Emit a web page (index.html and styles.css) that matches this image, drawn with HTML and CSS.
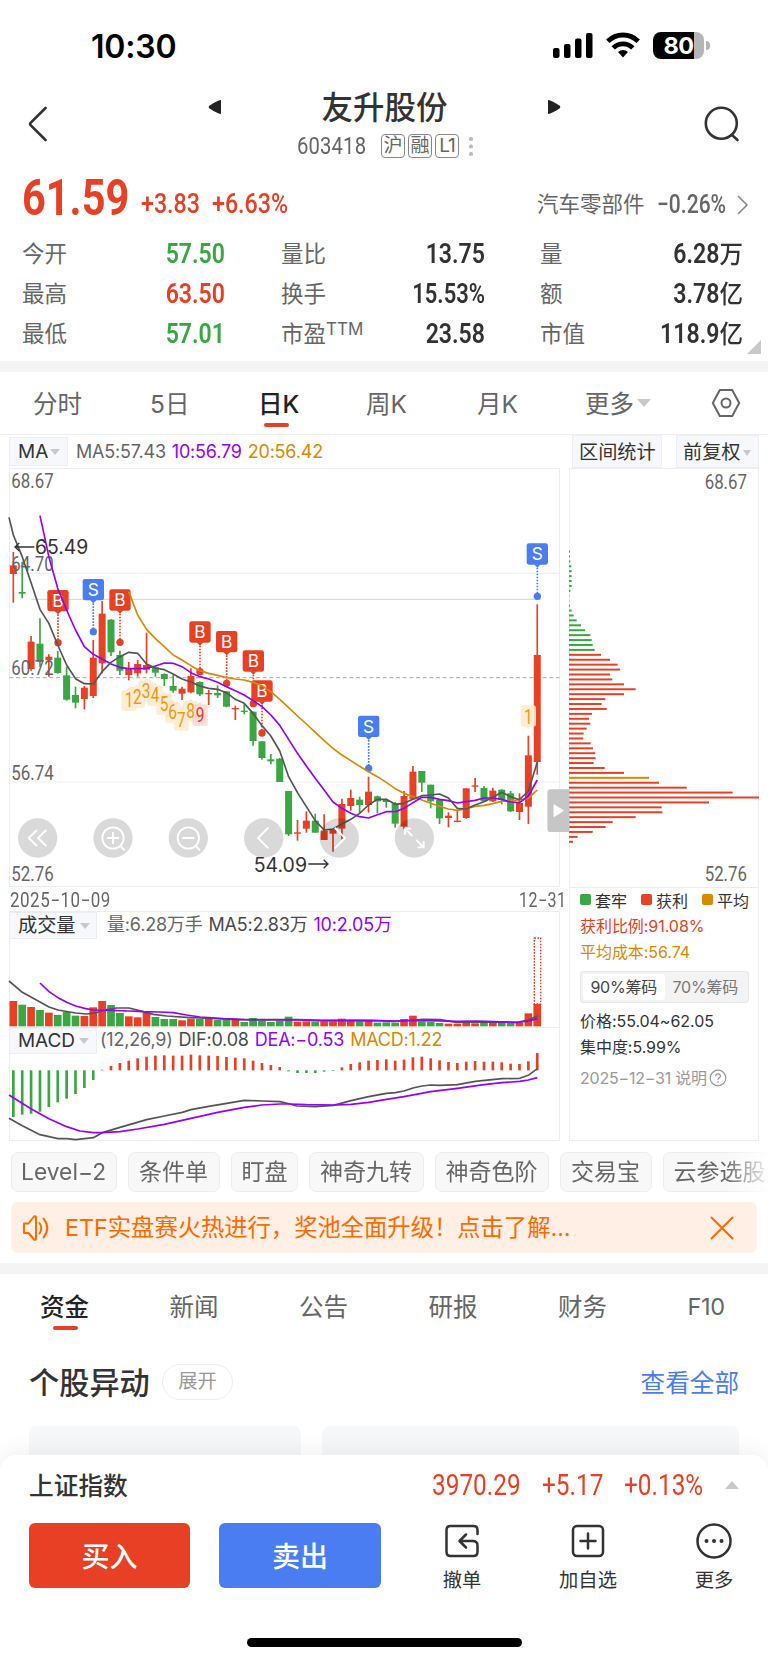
FILE: index.html
```html
<!DOCTYPE html>
<html lang="zh-CN">
<head>
<meta charset="utf-8">
<title>友升股份 603418</title>
<link rel="stylesheet" href="styles.css">
</head>
<body>
<div class="phone">
  <div class="status">
    <span class="clock">10:30</span>
    <svg class="signal" width="40" height="25" viewBox="0 0 40 25"><rect x="0" y="15" width="6.5" height="10" rx="2"/><rect x="11" y="11" width="6.5" height="14" rx="2"/><rect x="22" y="5.500" width="6.500" height="19.500" rx="2"/><rect x="33" y="0" width="6.500" height="25" rx="2"/></svg>
    <svg class="wifi" width="34" height="26" viewBox="0 0 34 26" fill="none" stroke="#000" stroke-width="4.800"><path d="M1.800 9.300a21.500 21.500 0 0 1 30.400 0"/><path d="M7.200 15.900a13.800 13.800 0 0 1 19.600 0"/><path d="M17 25.500l-5-5.400a7 7 0 0 1 10 0z" fill="#000" stroke="none"/></svg>
    <div class="battery"><span>80</span></div><i class="nub"></i>
  </div>

  <header class="head">
    <svg class="back" width="20" height="36" viewBox="0 0 20 36"><path d="M17.500 2L2.600 16.800q-1 1.200 0 2.400L17.500 34"/></svg>
    <svg class="tri prev" width="14" height="16" viewBox="0 0 14 16"><path d="M13 1v14Q9 14.500 1.200 9.200Q0 8 1.200 6.800Q9 1.500 13 1z"/></svg>
    <div class="name">
      <h1>友升股份</h1>
      <div class="code"><span class="din">603418</span><b>沪</b><b>融</b><b class="l1">L1</b><i></i></div>
    </div>
    <svg class="tri next" width="14" height="16" viewBox="0 0 14 16"><path d="M1 1v14Q5 14.500 12.800 9.200Q14 8 12.800 6.800Q5 1.500 1 1z"/></svg>
    <svg class="search" width="36" height="36" viewBox="0 0 36 36"><circle cx="17.300" cy="17.300" r="15.500"/><path d="M28 29l5.500 5"/></svg>
  </header>

  <section class="quote">
    <span class="din last">61.59</span><span class="din chg">+3.83</span><span class="din pct">+6.63%</span>
    <span class="sector">汽车零部件</span><span class="din spct">−0.26%</span>
    <svg class="more" width="13" height="20" viewBox="0 0 13 20"><path d="M2 1l9 9-9 9"/></svg>
  </section>

  <section class="stats">
    <label>今开</label><span class="din green">57.50</span><label>量比</label><span class="din">13.75</span><label>量</label><span class="din">6.28<em>万</em></span>
    <label>最高</label><span class="din red">63.50</span><label>换手</label><span class="din rate">15.53%</span><label>额</label><span class="din">3.78<em>亿</em></span>
    <label>最低</label><span class="din green">57.01</span><label>市盈<sup>TTM</sup></label><span class="din">23.58</span><label>市值</label><span class="din">118.9<em>亿</em></span>
    <i class="corner"></i>
  </section>

  <nav class="periods">
    <a>分时</a><a>5日</a><a class="on">日K</a><a>周K</a><a>月K</a><a class="drop">更多</a>
    <svg width="30" height="30" viewBox="0 0 30 30"><path d="M8.800 2h12.400l7 13-7 13H8.800l-7-13z"/><circle cx="15" cy="15" r="4.500"/></svg>
  </nav>

  <div class="tools">
    <span class="pick ma">MA</span>
    <span class="info ma-info"><span class="gray">MA5:57.43</span><span class="violet">10:56.79</span><span class="gold">20:56.42</span></span>
    <span class="pick range">区间统计</span><span class="pick adj">前复权</span>
  </div>

  <div class="charts">
    <div class="left">
      <svg id="kline" width="551" height="419" viewBox="27 24 1653 1257"></svg>
      <div class="dates"><span class="din">2025−10−09</span><span class="din">12−31</span></div>
      <div class="sub">
        <div class="subhead"><span class="pick ind">成交量</span><span class="info vol-info"><span class="gray">量:6.28万手</span><span class="dark">MA5:2.83万</span><span class="violet">10:2.05万</span></span></div>
        <svg id="volume" width="551" height="88" viewBox="27 177 1653 264"></svg>
        <div class="subhead line"><span class="pick ind">MACD</span><span class="info macd-info"><span class="gray">(12,26,9)</span><span class="dark">DIF:0.08</span><span class="violet">DEA:−0.53</span><span class="gold">MACD:1.22</span></span></div>
        <svg id="macd" width="551" height="87" viewBox="27 522 1653 261"></svg>
      </div>
    </div>
    <div class="right">
      <svg id="chips" width="190" height="418" viewBox="27 115 570 1254"></svg>
      <div class="chipinfo">
        <div class="legend"><span class="g">套牢</span><span class="r">获利</span><span class="y">平均</span></div>
        <p class="red">获利比例:91.08%</p>
        <p class="gold">平均成本:56.74</p>
        <div class="seg"><span class="on">90%筹码</span><span>70%筹码</span></div>
        <p>价格:55.04~62.05</p>
        <p>集中度:5.99%</p>
        <p class="note">2025−12−31 说明<svg width="18" height="18" viewBox="0 0 18 18"><circle cx="9" cy="9" r="7.800"/><path d="M6.600 7.300q0-2.400 2.400-2.400t2.400 2.100q0 1.200-1.300 1.900Q9 9.500 9 10.800M9 12.300v1.400"/></svg></p>
      </div>
    </div>
  </div>

  <div class="tags"><span>Level−2</span><span>条件单</span><span>盯盘</span><span>神奇九转</span><span>神奇色阶</span><span>交易宝</span><span>云参选股</span></div>

  <div class="banner">
    <svg width="28" height="28" viewBox="0 0 28 28"><path d="M2 9.500h4.500L12 2.500q2-.8 2 1v21q0 1.800-2 1L6.500 19H2zM17.500 9q3.500 5 0 10.500M21.500 4.500q7.500 9.500 0 19"/></svg>
    <span>ETF实盘赛火热进行，奖池全面升级！点击了解...</span>
    <svg class="x" width="24" height="24" viewBox="0 0 24 24"><path d="M1.500 1.500l21 21M22.500 1.500l-21 21"/></svg>
  </div>
  <div class="band"></div>

  <nav class="sections"><a class="on">资金</a><a>新闻</a><a>公告</a><a>研报</a><a>财务</a><a>F10</a></nav>
  <div class="moves"><h2>个股异动</h2><span class="pill">展开</span><a>查看全部</a></div>
  <div class="cards"><div></div><div></div></div>

  <footer class="dock">
    <div class="index"><span class="iname">上证指数</span><span class="din i1">3970.29</span><span class="din i2">+5.17</span><span class="din i3">+0.13%</span><i></i></div>
    <div class="actions">
      <button class="buy">买入</button><button class="sell">卖出</button>
      <div class="act a1"><svg width="36" height="36" viewBox="0 0 36 36"><path d="M33.500 11V7q0-4-4-4H6.500q-4 0-4 4v22q0 4 4 4h23q4 0 4-4v-6.500q0-4.500-5-4.500H16M22 11.500L15.500 18l6.500 6.500"/></svg>撤单</div>
      <div class="act a2"><svg width="36" height="36" viewBox="0 0 36 36"><rect x="3" y="3" width="30" height="30" rx="4"/><path d="M18 10.500v15M10.500 18h15"/></svg>加自选</div>
      <div class="act a3"><svg width="36" height="36" viewBox="0 0 36 36"><circle cx="18" cy="18" r="16.500"/><path class="dots" d="M10.500 18h.01M18 18h.01M25.500 18h.01"/></svg>更多</div>
    </div>
    <div class="home"></div>
  </footer>
</div>
<script src="chart.js"></script>
</body>
</html>
```
FILE: styles.css
```css
* { box-sizing: border-box; }
body { margin: 0; background: #fff; font-family: Inter, "Noto Sans CJK SC", sans-serif; color: #333; }
h1, h2, p { margin: 0; font-weight: 500; }
.phone { width: 768px; height: 1662px; overflow: hidden; display: flex; flex-direction: column; }
.phone > * { flex: none; }
svg { display: block; flex: none; }
.din { font-family: Roboto, "Noto Sans CJK SC", sans-serif; white-space: nowrap; transform: scaleX(.86); transform-origin: 0 50%; display: inline-block; }
.red { color: #e84025; }
.green { color: #3aa744; }
.violet { color: #9500ff; }
.gold { color: #d98a00; }
.gray { color: #666; }
.dark { color: #4a4a4a; }

.status { height: 80px; display: flex; align-items: flex-start; padding: 32px 0 0 91px; }
.clock { font: 600 32px/30px Inter, sans-serif; letter-spacing: -.2px; color: #000; width: 462px; }
.signal { margin-top: 1px; }
.wifi { margin: 0 13px 0 13px; }
.battery { width: 51px; height: 27px; border-radius: 8px; background: linear-gradient(90deg, #000 41px, #b5b5b5 41px); color: #fff; font: 700 23.500px/27px Inter, sans-serif; text-align: center; letter-spacing: -.5px; }
.nub { width: 4px; height: 9px; margin: 9px 0 0 2px; background: #b5b5b5; border-radius: 0 4px 4px 0; }

.head { height: 90px; display: flex; align-items: flex-start; }
.head svg { fill: none; stroke: #333; stroke-width: 2.6; stroke-linecap: round; }
.back { margin: 26px 0 0 28px; }
.head .tri { fill: #222; stroke: none; margin-top: 19px; }
.prev { margin-left: 160px; }
.name { width: 325px; text-align: center; }
.name h1 { font-size: 31.500px; line-height: 44px; margin-top: 5px; padding-top: 1px; height: 44px; color: #333; }
.code { display: flex; align-items: center; height: 28px; margin: 3px 0 0 75px; color: #666; }
.code .din { font-size: 23.500px; width: 84px; text-align: left; letter-spacing: .2px; }
.code b { width: 24px; height: 24px; margin-right: 3px; border: 1.500px solid #888; border-radius: 4px; font-size: 19px; line-height: 21px; font-weight: 400; }
.code .l1 { letter-spacing: -1px; }
.code i { width: 4px; height: 20px; margin-left: 7px; background: radial-gradient(circle at 2px 2px, #bbb 1.900px, transparent 2.200px) 0 1px / 4px 7.500px; }
.search { margin: 26px 0 0 143px; }

.quote { height: 64px; display: flex; align-items: flex-start; color: #e84025; }
.last { font-size: 50px; font-weight: 700; line-height: 56px; width: 119px; margin-left: 22px; transform: scaleX(.83); }
.chg, .pct { font-size: 27px; font-weight: 500; line-height: 69px; width: 71px; }
.pct { width: 323px; }
.sector { font-size: 21.500px; line-height: 68px; width: 120px; color: #666; margin-left: 2px; white-space: nowrap; }
.spct { font-size: 26px; font-weight: 500; line-height: 69px; color: #666; width: 79px; transform: scaleX(.81); }
.more { margin-top: 25px; fill: none; stroke: #888; stroke-width: 1.600; }

.stats { position: relative; height: 127px; padding: 0 25px 0 22px; display: grid; grid-template-columns: 58px 145px 140px 120px 138px 120px; grid-auto-rows: 39.700px; align-items: center; }
.stats label { font-size: 22.500px; color: #666; white-space: nowrap; padding-bottom: 3px; }
.stats label:nth-of-type(3n+2) { padding-left: 56px; }
.stats label:nth-of-type(3n) { padding-left: 55px; }
.stats .din { font-size: 27.500px; font-weight: 600; text-align: right; transform-origin: 100% 50%; transform: scaleX(.84); }
.stats .rate { transform: scaleX(.8); }
.stats em { font-style: normal; font-weight: 500; font-size: 25px; display: inline-block; transform: scaleX(1.120); transform-origin: 100% 50%; padding-left: 3px; line-height: 30px; }
.stats sup { font-size: 17px; line-height: 0; vertical-align: 7px; }
.corner { position: absolute; right: 7px; bottom: 7px; border: 7px solid; border-color: transparent #c8c8c8 #c8c8c8 transparent; }

.periods { height: 74px; border-top: 11px solid #f4f4f4; border-bottom: 1px solid #eee; display: grid; grid-template-columns: 117px 108px 108px 111px 108px 126px 30px; align-items: center; padding-left: 33px; font-size: 24.500px; color: #666; }
.periods a { white-space: nowrap; padding-top: 2px; line-height: 36px; }
.periods a.on, .sections a.on { color: #222; font-weight: 500; position: relative; }
.periods a.on::after { content: ""; position: absolute; left: 6px; bottom: -5px; width: 25px; height: 4px; border-radius: 2px; background: #e84025; }
.periods svg { fill: none; stroke: #666; stroke-width: 2; stroke-linejoin: round; }
.drop::after, .pick::after { content: ""; display: inline-block; border: 5px solid transparent; border-top: 6px solid #c8c8c8; border-bottom: 0; margin-left: 3px; vertical-align: 3px; }
.drop::after { border-width: 8px 7px 0; vertical-align: 6px; }

.tools { height: 33px; display: flex; align-items: flex-start; padding-left: 9px; }
.pick { background: #f7f8fc; border: 1px solid #eceef3; font-size: 19.200px; white-space: nowrap; color: #333; flex: none; }
.ma { margin-top: 2px; width: 59px; height: 29px; line-height: 27px; padding-left: 8px; font-size: 19px; }
.ma::after { margin-left: 2px; }
.info { display: flex; white-space: nowrap; font-size: 18px; letter-spacing: -.2px; }
.ma-info { margin: 2px 0 0 8px; line-height: 29px; width: 496px; gap: 6px; }
.range { width: 90px; height: 33px; line-height: 32px; padding-left: 6px; }
.range::after { display: none; }
.adj { width: 83px; height: 33px; line-height: 32px; margin-left: 14px; padding-left: 6px; }
.adj::after { margin-left: 2px; border-width: 6px 4.500px 0; }

.charts { height: 674px; display: grid; grid-template-columns: 560px 190px; padding-left: 9px; }
.charts svg { overflow: visible; }
.left { position: relative; z-index: 1; width: 551px; }
.dates { height: 25px; display: flex; color: #666; font-size: 19.500px; line-height: 27px; padding-left: 1px; }
.dates .din { transform: scaleX(.87); width: 509px; flex: none; letter-spacing: .6px; }
.dates .din + .din { width: 40px; transform: scaleX(.82); }
.sub { width: 551px; border: 1px solid #eee; height: 230px; margin-top: -1px; }
.sub > * { margin-left: -1px; }
.subhead { height: 27px; display: flex; }
.subhead.line { border-top: 1px solid #eee; width: 551px; }
.ind { width: 88px; height: 27px; line-height: 25px; padding-left: 8px; }
.line .ind { height: 26px; line-height: 23px; font-size: 19px; letter-spacing: -.1px; }
.ind::after { margin-left: 4px; }
.subhead .info { line-height: 26px; }
.line .info { line-height: 24px; }
.vol-info { margin-left: 10px; gap: 6px; }
.macd-info { margin-left: 3px; gap: 6px; }
.right { height: 673px; border: 1px solid #eee; }
.right svg { margin-left: -1px; }
.chipinfo { border-top: 1px solid #eee; padding: 0 0 0 9px; font-size: 16px; color: #333; }
.legend { display: flex; height: 26px; align-items: center; padding: 0 0 3px 1px; }
.legend span { width: 61px; flex: none; display: flex; align-items: center; white-space: nowrap; }
.legend span::before { content: ""; width: 11px; height: 11px; border-radius: 2px; margin-right: 4px; flex: none; background: #3aa744; }
.legend .r::before { background: #e84025; }
.legend .y::before { background: #d98a00; }
.chipinfo p { height: 26px; line-height: 25px; white-space: nowrap; font-weight: 400; padding-left: 1px; letter-spacing: -.05px; }
.chipinfo p.red { color: #e84025; }
.chipinfo p.gold { color: #d98a00; }
.seg { display: flex; width: 169px; height: 32px; margin: 5px 0 6px 1px; background: #f3f3f3; border: 1px solid #e6e6e6; border-radius: 3px; padding: 2px; color: #777; font-size: 16px; line-height: 26px; }
.seg span { width: 83px; text-align: center; letter-spacing: -.2px; white-space: nowrap; }
.seg .on { background: #fff; color: #444; border-radius: 3px; }
.chipinfo .note { display: flex; color: #999; align-items: center; margin-top: 4px; letter-spacing: -.2px; }
.note svg { margin-left: 2px; fill: none; stroke: #999; stroke-width: 1.200; }

.tags { margin-top: 10px; height: 40px; padding-left: 11px; display: flex; gap: 11px; overflow: hidden; -webkit-mask-image: linear-gradient(90deg, #000 725px, transparent 772px); mask-image: linear-gradient(90deg, #000 725px, transparent 772px); }
.tags span { flex: none; height: 40px; border: 1px solid #ececec; border-radius: 7px; background: #f8f8f8; color: #666; font-size: 23px; line-height: 38px; padding: 0 10px; width: 114.500px; white-space: nowrap; }
.tags span:nth-child(1) { width: 106px; padding-left: 9px; font-size: 22.800px; }
.tags span:nth-child(2), .tags span:nth-child(6) { width: 91.500px; }
.tags span:nth-child(3) { width: 67.500px; }
.banner { margin: 10px 11px 0; height: 51px; border-radius: 7px; background: #ffefe4; color: #ff6b00; display: flex; align-items: center; font-size: 23.300px; }
.banner svg { margin-left: 11px; fill: none; stroke: #ff6b00; stroke-width: 2; stroke-linecap: round; stroke-linejoin: round; }
.banner span { flex: none; width: 659px; padding: 0 0 3px 15px; white-space: nowrap; }
.banner .x { margin-left: 1px; }
.band { height: 11px; margin-top: 10px; background: #f4f4f4; }
.sections { height: 66px; display: grid; grid-template-columns: 129.500px 129.500px 129.500px 129.500px 129.500px auto; padding-left: 40px; font-size: 24.500px; line-height: 66px; color: #666; }
.sections a:last-child { font-size: 23.500px; letter-spacing: -.4px; }
.sections a.on::after { content: ""; position: absolute; left: 13px; top: 52px; width: 25px; height: 4px; border-radius: 2px; background: #e84025; }
.moves { height: 86px; display: flex; align-items: center; padding: 0 29px 0 29px; }
.moves h2 { font-size: 30.200px; width: 133px; color: #333; white-space: nowrap; padding-bottom: 5px; }
.pill { width: 71px; height: 36px; border: 1.500px solid #eee; border-radius: 18px; text-align: center; font-size: 19.300px; line-height: 32px; color: #999; margin-bottom: 2px; }
.moves a { margin-left: auto; font-size: 24.600px; color: #4b7df2; padding-bottom: 4px; }
.cards { height: 29px; padding: 0 29px; display: grid; grid-template-columns: 272px 417px; gap: 21px; }
.cards div { background: #f6f7f9; border-radius: 7px 7px 0 0; }

.dock { position: relative; height: 207px; background: #fff; border-radius: 16px 16px 0 0; box-shadow: 0 -4px 22px rgba(0, 0, 0, .06); padding: 0 29px; }
.index { height: 68px; display: flex; align-items: center; color: #e84025; padding-bottom: 8px; }
.iname { font-size: 24.700px; width: 403px; color: #333; font-weight: 500; padding: 0 0 2px; }
.index .din { font-size: 29px; transform: scaleX(.84); }
.i1 { width: 110px; } .i2 { width: 82px; } .i3 { width: 101px; }
.index i { border: 7px solid transparent; border-bottom: 8px solid #c8c8c8; border-top: 0; }
.actions { display: flex; align-items: flex-start; }
.actions > * { flex: none; }
.actions button { width: 161px; height: 65px; border: 0; border-radius: 6px; color: #fff; font: 500 28px/65px "Noto Sans CJK SC", sans-serif; padding: 0; }
.actions .buy { background: #e84025; }
.actions .sell { background: #4b7df2; margin-left: 29px; width: 162px; }
.act { display: flex; flex-direction: column; align-items: center; font-size: 19.300px; line-height: 28px; width: 80px; gap: 7px; white-space: nowrap; }
.act svg { fill: none; stroke: #333; stroke-width: 2.500; stroke-linecap: round; stroke-linejoin: round; }
.act .dots { stroke-width: 4; }
.a1 { margin-left: 41px; } .a2 { margin-left: 46px; } .a3 { margin-left: 46px; }
.home { width: 275px; height: 9px; border-radius: 5px; background: #000; margin: 44px 0 0 218px; }
```
FILE: chart.js
```js
const RED = '#e84025', GREEN = '#3aa744', BLUE = '#4b7df2';
const X = i => 40 + 26.64 * i;
const el = (id, html) => { document.getElementById(id).innerHTML = html; };
const rect = (x, y, w, h, fill, extra = '') => `<rect x="${x}" y="${y}" width="${w}" height="${h}" fill="${fill}" ${extra}/>`;
const line = (x1, y1, x2, y2, c, w = 3, extra = '') => `<line x1="${x1}" y1="${y1}" x2="${x2}" y2="${y2}" stroke="${c}" stroke-width="${w}" ${extra}/>`;
const curve = (pts, c) => `<polyline fill="none" stroke="${c}" stroke-width="5" stroke-linejoin="round" points="${pts.map(p => p.join()).join(' ')}"/>`;
const series = (start, ys) => ys.map((y, k) => [X(start + k), y]);
const text = (x, y, s, size, fill, len, font, extra = '') => `<text x="${x}" y="${y}" font-family="${font || 'Roboto'}, sans-serif" font-size="${size}" fill="${fill}" ${len ? `textLength="${len}" lengthAdjust="spacingAndGlyphs"` : ''} ${extra}>${s}</text>`;

/* [up?, high, body top, body bottom, low] */
const K = [
 [1,276,316,342,428],[0,305,396,401,415],[1,528,545,627,632],[0,475,551,605,620],[1,583,590,600,650],[0,573,593,639,641],
 [0,620,646,719,722],[0,680,705,728,745],[1,678,683,717,748],[1,540,593,708,714],[1,423,461,610,640],[0,478,479,577,588],
 [0,572,585,632,645],[1,606,626,645,661],[1,600,612,640,650],[1,518,615,629,640],[0,618,622,638,650],[0,640,642,657,678],
 [0,645,678,692,698],[1,680,686,701,720],[1,625,648,697,700],[0,664,666,703,708],[1,690,699,702,735],[0,676,699,706,714],
 [0,694,694,740,742],[1,737,744,747,780],[0,733,752,756,763],[0,755,755,843,857],[0,844,844,894,899],[0,882,898,904,913],
 [0,894,896,966,966],[0,993,993,1123,1128],[1,1080,1117,1119,1142],[1,1054,1082,1106,1118],[0,1061,1082,1118,1118],
 [1,1063,1112,1140,1140],[1,1108,1108,1121,1175],[1,1016,1032,1106,1138],[1,989,1014,1038,1052],[0,1010,1019,1035,1058],
 [1,950,995,1035,1058],[0,1007,1009,1024,1060],[0,1016,1020,1026,1043],[0,1026,1030,1091,1103],[1,993,1008,1100,1107],
 [1,918,935,1018,1020],[0,933,933,968,996],[0,974,974,1024,1045],[0,1018,1020,1075,1092],[1,1057,1067,1074,1102],
 [1,1050,1082,1086,1087],[1,985,985,1074,1076],[1,954,976,980,996],[0,978,984,1024,1026],[1,983,992,1024,1026],
 [0,988,989,1020,1033],[0,993,1000,1054,1056],[1,1000,1029,1056,1080],[1,827,886,1040,1092],[1,433,585,906,944]];
const ma5 = [[27,172], ...series(0, [225,290,368,448,490,555,615,656,671,672,635,607,590,577,580,612,624,629,642,657,666,678,685,688,698,718,730,760,797,828,873,950,998,1040,1082,1110,1107,1092,1078,1060,1035,1018,1018,1033,1030,1018,1007,1005,1002,1014,1045,1047,1035,1025,1012,997,1010,1019,993,907])];
const ma10 = series(3, [167,290,385,450,510,560,583,597,612,622,626,626,625,618,609,610,620,638,650,657,667,680,692,705,722,740,765,796,838,880,918,955,990,1026,1045,1060,1070,1074,1064,1055,1055,1045,1028,1012,1012,1018,1022,1029,1025,1021,1014,1014,1018,1026,1028,1008,960]);
const ma20 = series(13, [395,465,508,536,560,585,600,617,632,640,646,653,657,660,667,677,695,718,743,768,792,817,842,865,885,902,919,935,950,967,986,1000,1010,1020,1030,1039,1047,1051,1046,1039,1036,1031,1024,1021,1020,1015,990]);

const flag = (k, x, top, dot) => {
  const c = k === 'B' ? RED : BLUE;
  return line(x, top + 64, x, dot, c, 5, 'stroke-dasharray="5 4"') + `<circle cx="${x}" cy="${dot}" r="11" fill="${c}"/>`
    + rect(x - 32, top, 64, 64, c, 'rx="7"') + `<path d="M${x - 10} ${top + 63}h20l-10 10z" fill="${c}"/>`
    + text(x, top + 51, k, 52, '#fff', 0, 'Inter', 'text-anchor="middle"');
};
const badge = (x, y, fill, below) => rect(x - 23, y - 32, 46, 64, fill, 'rx="8" opacity=".9"')
  + (below ? `<path d="M${x - 8} ${y + 31}l8 9l8 -9z" fill="${fill}"/>` : `<path d="M${x - 8} ${y - 31}l8 -8l8 8z" fill="${fill}"/>`);
const badgeText = (x, y, n, color) => text(x - 13, y + 20, n, 58, color, 26);

let s = rect(28.5, 25.5, 1650, 1254, 'none', 'stroke="#eee" stroke-width="3"');
s += line(28, 340, 1678, 340, '#eee') + line(28, 966, 1678, 966, '#eee') + line(94, 418, 1624, 418, '#d4d4d4');
s += line(28, 653, 1678, 653, '#aaa', 3, 'stroke-dasharray="12 8"');
K.forEach(([up, h, t, b, l], i) => {
  const c = up ? RED : GREEN;
  s += line(X(i), h, X(i), l, c, 5) + rect(X(i) - 10.5, t, 21, Math.max(4, b - t), c);
});
[['68.67', 83], ['64.70', 333], ['60.72', 646], ['56.74', 959], ['52.76', 1262]].forEach(([v, y]) => { s += text(34, y, v, 59, '#666', 127); });
const nums = [[387,721],[412,712],[438,693],[465,706],[492,733],[518,757],[544,780],[572,755],[600,765]];
const PALE = '#fdebd2', PINK = '#fbd9d5', AMBER = '#ef9a10';
s += nums.map(([x, y], i) => badge(x, y, i === 8 ? PINK : PALE)).join('');
s += nums.map(([x, y], i) => badgeText(x, y, i + 1, i === 8 ? RED : AMBER)).join('');
s += badge(1585, 768, PALE, true) + badgeText(1585, 771, 1, AMBER);
s += [['B',174,390,548],['S',280,357,515],['B',360,388,547],['B',600,484,635],['B',680,513,670],['B',760,571,731],['B',786,661,819],['S',1106,767,925],['S',1612,250,409]].map(a => flag(...a)).join('');
s += curve(ma20, '#d98a00') + curve(ma10, '#9500ff') + curve(ma5, '#555');
const arrow = 'fill="none" stroke="#333" stroke-width="4"';
s += `<path d="M103 261H45M58 249L45 261L58 273" ${arrow}/>` + text(105, 283, '65.49', 59, '#333', 160, 'Inter');
s += `<path d="M925 1212H984M971 1199L984 1212L971 1225" ${arrow}/>` + text(761, 1235, '54.09', 59, '#333', 160, 'Inter');
const ico = [
  [113, 'M-2 -24L-27 0L-2 24M26 -24L1 0L26 24'],
  [339, 'M32 0A32 32 0 1 0 -32 0A32 32 0 1 0 32 0M24 26L35 37M-18 0H18M0 -18V18'],
  [565, 'M32 0A32 32 0 1 0 -32 0A32 32 0 1 0 32 0M24 26L35 37M-18 0H18'],
  [791, 'M14 -31L-17 0L14 31'],
  [1018, 'M-14 -31L17 0L-14 31'],
  [1243, 'M-28 -10V-28H-10M-28 -28L-6 -6M28 10V28H10M28 28L6 6']];
s += ico.map(([x, d]) => `<g transform="translate(${x} 1134)"><circle r="59" fill="#000" fill-opacity=".15"/><path d="${d}" fill="none" stroke="#fff" stroke-width="5.500"/></g>`).join('');
s += `<path d="M1708 988H1652q-10 0-10 10V1106q0 10 10 10H1708z" fill="#c6c6c6"/><path d="M1662 1034L1690 1052L1662 1070z" fill="#fff" stroke="#fff" stroke-width="3" stroke-linejoin="round"/>`;
el('kline', s);

const V = [363,374,381,390,398,405,396,407,408,382,363,375,399,409,412,398,411,417,417,421,416,417,417,420,419,420,426,414,421,426,422,410,425,424,425,424,424,416,423,424,422,428,427,428,417,407,424,425,429,431,431,427,430,429,429,429,429,428,400,372];
let v = V.map((t, i) => rect(X(i) - 11.5, t, 23, 439 - t, K[i][0] ? RED : GREEN)).join('');
v += rect(1603, 174, 19, 198, 'none', `stroke="${RED}" stroke-width="4" stroke-dasharray="5 4"`);
v += curve([[27,303],[67,337],[120,366],[147,381],[174,390],[227,399],[260,402],[290,398],[320,389],[350,384],[387,384],[430,395],[460,403],[500,408],[560,412],[600,414],[720,419],[892,419],[970,421],[1053,421],[1130,422],[1180,424],[1240,420],[1270,418],[1320,419],[1370,427],[1440,426],[1552,427],[1585,420],[1612,408]], '#555');
v += curve([[120,309],[147,335],[174,353],[200,367],[227,378],[254,385],[280,390],[334,391],[387,393],[430,395],[480,396],[520,398],[560,405],[600,411],[670,416],[733,419],[900,420],[960,422],[1100,421],[1190,423],[1270,421],[1370,424],[1430,423],[1552,427],[1585,423],[1612,416]], '#9500ff');
el('volume', v);

const M = [711,704,701,695,681,667,656,642,624,600,569,558,549,542,535,530,527,526,527,527,524,526,527,528,531,533,535,542,549,555,561,574,579,579,579,575,573,562,552,547,542,540,538,542,539,532,530,535,541,546,549,545,543,545,545,547,551,552,544,519];
let m = M.map((y, i) => y > 571 ? rect(X(i) - 4, 571, 8, y - 571, GREEN) : rect(X(i) - 4, y, 8, 571 - y, RED)).join('');
m += curve([[27,715],[67,737],[120,764],[174,776],[200,776],[227,779],[280,773],[307,758],[360,742],[440,719],[493,708],[547,697],[573,689],[626,679],[680,670],[733,661],[786,663],[840,665],[870,672],[890,678],[946,680],[1000,676],[1053,662],[1106,650],[1159,640],[1186,638],[1212,633],[1239,624],[1266,618],[1292,615],[1319,616],[1372,614],[1426,604],[1506,596],[1559,595],[1585,586],[1612,566]], '#555');
m += curve([[27,645],[94,687],[147,716],[200,740],[240,753],[280,758],[307,758],[360,755],[413,747],[493,733],[573,715],[653,697],[733,682],[786,675],[840,672],[866,672],[920,674],[1000,675],[1053,673],[1106,667],[1159,658],[1212,650],[1292,635],[1372,625],[1452,614],[1506,608],[1559,604],[1585,600],[1612,593]], '#9500ff');
el('macd', m);

const C = [3,3,4,7,8,8,8,8,4,1,1,3,8,14,23,36,48,64,68,71,77,96,123,146,153,123,130,165,200,165,109,98,113,69,60,64,53,44,43,65,72,79,80,74,107,165,240,270,353,491,570,420,278,280,200,131,110,71,26,12];
let c = C.map((w, i) => rect(27, 359.5 + 14.76 * i, w, 6, i < 21 ? GREEN : i === 46 ? '#d98a00' : RED)).join('');
c += text(434, 175, '68.67', 59, '#666', 127) + text(434, 1352, '52.76', 59, '#666', 127);
el('chips', c);
```
